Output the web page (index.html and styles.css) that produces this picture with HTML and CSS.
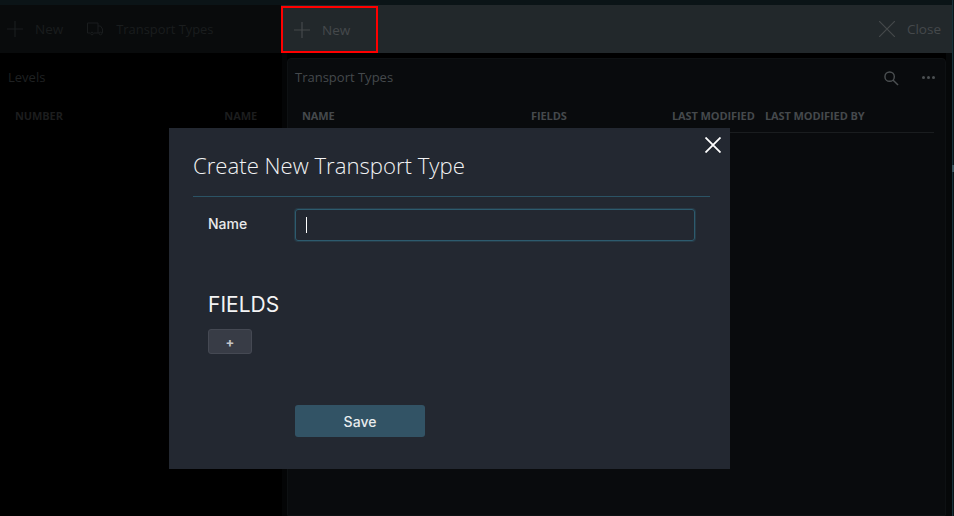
FILE: index.html
```html
<!DOCTYPE html>
<html lang="en">
<head>
<meta charset="utf-8">
<title>Create New Transport Type</title>
<link rel="stylesheet" href="styles.css">
</head>
<body>
<div class="page">
  <div class="topstrip"></div>
  <div class="toolbar">
    <div class="tb-left">
      <span class="tb-item first">
        <svg class="ico16" viewBox="0 0 16 16"><path d="M8 0V16M0 8H16"/></svg>
        <span>New</span>
      </span>
      <span class="tb-item second">
        <svg class="ico-truck" viewBox="0 0 16 14"><path d="M3 11H0.500V1H11V11H7M11 4H13.500L15.500 7V11H15M11 11H12"/><circle cx="5" cy="11.500" r="1.300"/><circle cx="13.500" cy="11.500" r="1.300"/></svg>
        <span class="tb-long">Transport Types</span>
      </span>
    </div>
    <div class="tb-right">
      <span class="tb-new">
        <svg class="ico16" viewBox="0 0 16 16"><path d="M8 0V16M0 8H16"/></svg>
        <span>New</span>
      </span>
      <span class="tb-close">
        <svg class="ico16" viewBox="0 0 16 16"><path d="M0 0L16 16M16 0L0 16"/></svg>
        <span>Close</span>
      </span>
    </div>
  </div>
  <div class="main">
    <section class="levels">
      <h2 class="panel-title levels-title">Levels</h2>
      <div class="thead levels-head"><span>NUMBER</span><span>NAME</span></div>
    </section>
    <div class="gutter"></div>
    <section class="types">
      <div class="types-top">
        <h2 class="panel-title">Transport Types</h2>
        <svg class="ico-search" viewBox="0 0 16 16"><circle cx="6" cy="6" r="5"/><path d="M9.500 9.500L15 15"/></svg>
        <span class="dots"><i></i><i></i><i></i></span>
      </div>
      <div class="thead types-head">
        <span class="c-name">NAME</span>
        <span class="c-fields">FIELDS</span>
        <span class="c-mod">LAST MODIFIED</span>
        <span class="c-by">LAST MODIFIED BY</span>
      </div>
    </section>
    <div class="rail"></div>
  </div>

  <div class="edge"><span class="edge-handle"></span></div>

  <div class="modal">
    <svg class="modal-x" viewBox="0 0 16 16"><path d="M0.500 0.500L15.500 15.500M15.500 0.500L0.500 15.500"/></svg>
    <h1 class="modal-title">Create New Transport Type</h1>
    <div class="modal-body">
      <div class="row">
        <label class="lbl">Name</label>
        <div class="input"><span class="caret"></span></div>
      </div>
      <h3 class="fields">FIELDS</h3>
      <button class="add">+</button>
      <button class="save">Save</button>
    </div>
  </div>
</div>
</body>
</html>
```
FILE: styles.css
```css
* { box-sizing: border-box; }
html, body { margin: 0; padding: 0; height: 100%; background: #000; overflow: hidden; }
.page { position: relative; width: 954px; height: 516px; display: flex; flex-direction: column; font-family: "Open Sans", sans-serif; }
.topstrip { height: 5px; background: #0b1417; flex: none; }
.toolbar { height: 48px; display: flex; flex: none; font-size: 13.500px; }
.tb-left { width: 281px; background: #090b0c; color: #1a1d1e; display: flex; align-items: center; padding-left: 7px; flex: none; }
.tb-left svg { stroke: #1a1d1e; }
.tb-item { display: flex; align-items: center; }
.tb-item.first svg { margin-right: 12px; }
.tb-item.second { margin-left: 24px; }
.tb-item.second svg { margin-right: 13px; }
.tb-long { font-size: 12.900px; }
.tb-right { flex: 1; background: #22282b; display: flex; align-items: center; justify-content: space-between; color: #45494b; padding-right: 13px; }
.tb-right svg { stroke: #45494b; }
.tb-new { width: 97px; height: 47px; border: 2px solid #f00; display: flex; align-items: center; padding-left: 11px; align-self: flex-start; margin-top: 1px; }
.tb-new svg { margin-right: 12px; }
.tb-close { display: flex; align-items: center; }
.tb-close svg { margin-right: 12px; }
.ico16 { width: 16px; height: 16px; fill: none; stroke-width: 1.200; flex: none; }
.ico-truck { width: 16px; height: 14px; fill: none; stroke-width: 1; flex: none; }

.main { flex: 1; display: flex; min-height: 0; }
.levels { width: 282px; flex: none; background: #000; }
.gutter { width: 5px; flex: none; background: #040506; }
.types { flex: 1; background: #090b0d; border: 1px solid #0e1113; border-radius: 4px 4px 0 0; margin-top: 5px; padding: 0 11px 0 7px; }
.rail { width: 6px; flex: none; margin-right: 2px; background: #060809; }
.edge { position: absolute; top: 0; right: 0; bottom: 0; width: 2px; background: #0b1417; border-left: 1px solid #17333c; }
.edge-handle { position: absolute; right: 0; top: 165px; width: 2px; height: 7px; background: #3b5761; }
.panel-title { margin: 0; font-weight: 400; font-size: 13px; line-height: 18px; color: #45494c; }
.levels-title { color: #1f2122; padding: 15px 0 0 8px; }
.types-top { display: flex; align-items: center; height: 29px; padding-top: 7px; }
.types-top .panel-title { flex: 1; }
.ico-search { width: 15px; height: 15px; margin-top: 2px; fill: none; stroke: #4c5052; stroke-width: 1.500; flex: none; }
.dots { display: flex; gap: 2px; margin: 0 -1px 0 23px; flex: none; }
.dots i { width: 3px; height: 3px; border-radius: 50%; background: #4c5052; }
.thead { font-weight: 700; font-size: 11px; line-height: 14px; letter-spacing: -0.100px; }
.levels-head { display: flex; justify-content: space-between; color: #1c1d1e; padding: 23px 25px 0 15px; }
.types-head { display: flex; color: #45494c; height: 45px; padding: 21px 0 0 7px; border-bottom: 1px solid #1a1d1f; }
.c-name { width: 229px; }
.c-fields { width: 141px; }
.c-mod { width: 93px; }

.modal { position: absolute; left: 169px; top: 128px; width: 561px; height: 341px; background: #232831; color: #fff; font-family: Inter, sans-serif; }
.modal-x { position: absolute; right: 9px; top: 9px; width: 16px; height: 16px; fill: none; stroke: #fff; stroke-width: 1.800; }
.modal-title { margin: 0 20px 0 24px; height: 69px; padding-top: 20px; font-family: "Open Sans", sans-serif; font-weight: 300; font-size: 22.150px; line-height: 34px; color: #f2f3f4; border-bottom: 1px solid #2b5365; }
.modal-body { padding: 12px 35px 0 39px; }
.row { display: flex; align-items: center; }
.lbl { width: 87px; padding-bottom: 3px; font-size: 14px; font-weight: 500; color: #e9eaeb; flex: none; }
.input { flex: 1; height: 32px; border: 1px solid #2d5b6e; border-radius: 3px; box-shadow: 0 0 0 1px #263a46; display: flex; align-items: center; padding-left: 10px; }
.caret { width: 1px; height: 16px; background: #fff; }
.fields { margin: 52px 0 0; font-size: 21px; font-weight: 400; line-height: 24px; color: #f4f4f5; }
.add { display: block; width: 44px; height: 25px; margin-top: 12px; padding: 0; background: #383c46; border: 1px solid #454953; border-radius: 3px; color: #c4c5c8; font-family: Inter, sans-serif; font-size: 13px; font-weight: 700; }
.save { display: block; width: 130px; height: 32px; margin: 51px 0 0 87px; padding: 0; background: #325365; border: 0; border-radius: 3px; color: #e8ecee; font-family: Inter, sans-serif; font-size: 14px; font-weight: 500; }
```
